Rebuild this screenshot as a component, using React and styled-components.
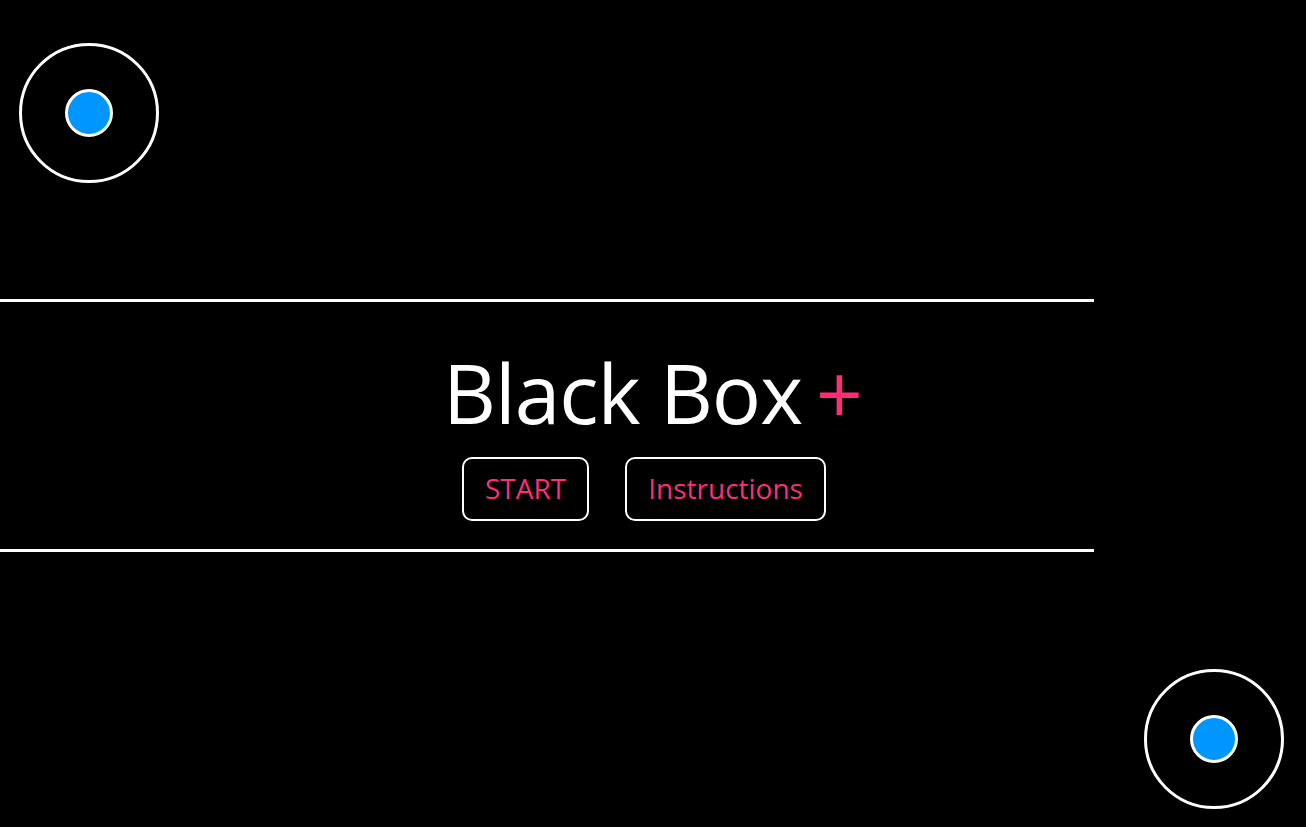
import React from 'react';
import styled, { createGlobalStyle } from 'styled-components';

const GlobalStyle = createGlobalStyle`
  html, body {
    margin: 0;
    padding: 0;
    background: #000;
    overflow: hidden;
  }
  body {
    font-family: "Open Sans", "Noto Sans", sans-serif;
  }
`;

const Page = styled.div`
  width: 100vw;
  height: 100vh;
  background: #000;
  display: flex;
  flex-direction: column;
`;

const CornerRow = styled.div`
  display: flex;
  justify-content: ${(p) => (p.$end ? 'flex-end' : 'flex-start')};
  padding: ${(p) => (p.$end ? '117px 22px 0 0' : '43px 0 0 19px')};
`;

const Ring = styled.div`
  width: 140px;
  height: 140px;
  box-sizing: border-box;
  border: 3.5px solid #fff;
  border-radius: 50%;
  display: flex;
  align-items: center;
  justify-content: center;
`;

const Dot = styled.div`
  width: 48px;
  height: 48px;
  box-sizing: border-box;
  border: 3px solid #fff;
  border-radius: 50%;
  background: #0096ff;
`;

const Band = styled.section`
  margin-top: 116px;
  display: flex;
  flex-direction: column;
  align-items: center;
`;

const Rule = styled.div`
  align-self: flex-start;
  width: 1094px;
  height: 3px;
  background: #fff;
`;

const Title = styled.h1`
  margin: 48px 0 0;
  font-size: 82px;
  line-height: 84px;
  letter-spacing: -1px;
  font-weight: 400;
  color: #fff;
  white-space: nowrap;
`;

const Plus = styled.span`
  color: #ff2d78;
  margin-left: 14px;
  letter-spacing: 0;
`;

const Buttons = styled.div`
  display: flex;
  gap: 36px;
  padding-right: 18px;
  margin: 23px 0 28px;
`;

const Button = styled.button`
  height: 64px;
  box-sizing: border-box;
  padding: 0 21px 3px;
  background: #000;
  color: #ff2d78;
  border: 2.5px solid #fff;
  border-radius: 10px;
  font-family: "Open Sans", "Noto Sans", sans-serif;
  font-size: 28px;
  line-height: 1;
  cursor: pointer;
`;

function Joystick() {
  return (
    <Ring>
      <Dot />
    </Ring>
  );
}

export default function App() {
  return (
    <Page>
      <GlobalStyle />
      <CornerRow>
        <Joystick />
      </CornerRow>
      <Band>
        <Rule />
        <Title>
          Black Box<Plus>+</Plus>
        </Title>
        <Buttons>
          <Button>START</Button>
          <Button>Instructions</Button>
        </Buttons>
        <Rule />
      </Band>
      <CornerRow $end>
        <Joystick />
      </CornerRow>
    </Page>
  );
}
